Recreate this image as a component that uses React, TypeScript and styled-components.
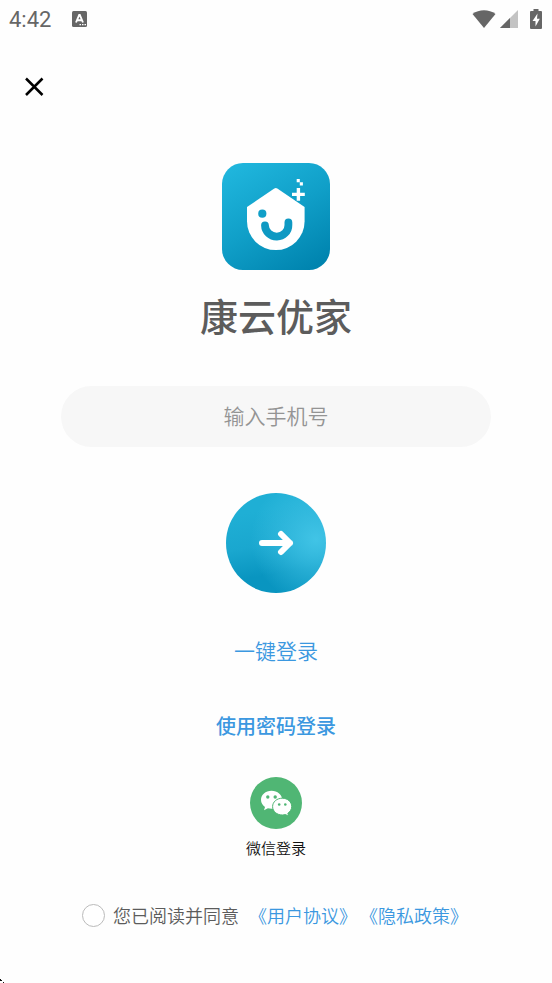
import React, { useState } from "react";
import styled, { createGlobalStyle } from "styled-components";

const GlobalStyle = createGlobalStyle`
  * { box-sizing: border-box; }
  html, body { margin: 0; background: #fefefe; }
  body, button, input {
    font-family: "Noto Sans CJK SC", "Noto Sans", sans-serif;
  }
`;

const Page = styled.div`
  position: relative;
  min-height: 100vh;
  display: flex;
  flex-direction: column;
  background: #fefefe;
`;

const StatusBar = styled.header`
  display: flex;
  align-items: center;
  justify-content: space-between;
  height: 38px;
  padding: 0 10px 0 9px;
  color: #666;
`;

const StatusGroup = styled.div<{ $gap: number }>`
  display: flex;
  align-items: center;
  gap: ${(p) => p.$gap}px;
`;

const Clock = styled.time`
  padding-top: 2px;
  font: 400 22px/36px Roboto, sans-serif;
`;

const TopNav = styled.nav`
  display: flex;
  padding: 37px 22px 0;
`;

const PlainButton = styled.button`
  display: flex;
  align-items: center;
  justify-content: center;
  padding: 0;
  border: 0;
  background: none;
  cursor: pointer;
`;

const Main = styled.main`
  display: flex;
  flex-direction: column;
  align-items: center;
  padding: 64px 61px 0;
`;

const Wordmark = styled.h1`
  margin: 17px 0 44px;
  color: #5c5c5c;
  font-size: 38px;
  font-weight: 500;
  line-height: 54px;
`;

const PhoneInput = styled.input`
  width: 100%;
  height: 61px;
  padding: 0 30px 3px;
  border: 0;
  border-radius: 32px;
  background: #f7f7f7;
  color: #333;
  font-size: 21px;
  font-weight: 350;
  text-align: center;
  &::placeholder { color: #949494; opacity: 1; }
`;

const SubmitButton = styled(PlainButton)`
  width: 100px;
  height: 100px;
  margin: 46px 0 41px;
  border-radius: 50%;
  background:
    radial-gradient(circle at 90% 46%, #41c4e6 0%, rgba(62, 193, 228, 0.7) 22%, rgba(50, 184, 220, 0) 62%),
    linear-gradient(170deg, #1fafd5 20%, #1aa7cf 50%, #0995c0 76%, #0a95c0 100%);
`;

const TextLink = styled.a<{ $size: number; $weight?: number }>`
  color: #3b98e0;
  font-size: ${(p) => p.$size}px;
  font-weight: ${(p) => p.$weight ?? 350};
  line-height: 32px;
  text-decoration: none;
`;

const LoginOptions = styled.div`
  display: flex;
  flex-direction: column;
  align-items: center;
  gap: 44px;
`;

const WechatButton = styled(PlainButton)`
  flex-direction: column;
  gap: 8px;
  margin-top: 35px;
  color: #111;
  font-size: 15px;
  font-weight: 350;
  line-height: 22px;
`;

const Agreement = styled.div`
  display: flex;
  align-items: center;
  justify-content: center;
  margin-top: 40px;
  padding: 0 10px 0 8px;
  white-space: nowrap;
`;

const AgreeLabel = styled.label`
  display: flex;
  align-items: center;
  gap: 8px;
  margin-right: 10px;
  color: #5c5c5c;
  font-size: 18px;
  font-weight: 350;
  line-height: 32px;
`;

const AgreeCheck = styled.input`
  appearance: none;
  width: 23px;
  height: 23px;
  margin: 0;
  border: 1px solid #bbb;
  border-radius: 50%;
  background: #fff;
  &:checked { background: #3b98e0; box-shadow: inset 0 0 0 4px #fff; }
`;

const PolicyLinks = styled.div`
  display: flex;
  gap: 3px;
`;

const CornerMark = styled.svg`
  position: absolute;
  left: 0;
  bottom: 0;
`;

const KeyboardIcon = () => (
  <svg width="15" height="16" viewBox="0 0 15 16" aria-hidden="true">
    <rect width="15" height="16" rx="1.5" fill="#666" />
    <path d="M4 11.500 7.200 4h.6L11 11.500M5.200 9.200h4.600" fill="none" stroke="#fff" strokeWidth="1.900" />
    <path d="M7.500 13H9v1.300H7.500zm2.500 0h1.500v1.300H10zm2.500 0H14v1.300h-1.500z" fill="#fff" />
  </svg>
);

const WifiIcon = () => (
  <svg width="24" height="19" viewBox="0 0 24 19" aria-hidden="true">
    <path d="M.5 4C7-1 17-1 23.500 4L12 18Z" fill="#666" />
  </svg>
);

const SignalIcon = () => (
  <svg width="18" height="18" viewBox="0 0 18 18" aria-hidden="true">
    <path d="M0 18 18 0v18Z" fill="#c3c3c3" />
    <path d="M0 18 10 8v10Z" fill="#666" />
  </svg>
);

const BatteryIcon = () => (
  <svg width="12" height="20" viewBox="0 0 12 20" aria-hidden="true">
    <path d="M3.500 0h5v2H11q1 0 1 1v16q0 1-1 1H1q-1 0-1-1V3q0-1 1-1h2.500Z" fill="#666" />
    <path d="M7.500 4.500 2.500 12h3v5.500l4.300-7.700H7Z" fill="#fff" />
  </svg>
);

const CloseIcon = () => (
  <svg width="24" height="24" viewBox="0 0 24 24" aria-hidden="true">
    <path d="m4 3.500 16.500 16.500M20.500 3.500 4 20" fill="none" stroke="#000" strokeWidth="2.500" />
  </svg>
);

const AppLogo = () => (
  <svg width="108" height="108" viewBox="0 0 108 108" role="img" aria-label="康云优家">
    <defs>
      <linearGradient id="logoFill" x1="0.200" y1="0" x2="0.800" y2="1">
        <stop offset="0" stopColor="#1fb5dc" />
        <stop offset="0.500" stopColor="#109fc8" />
        <stop offset="1" stopColor="#0084af" />
      </linearGradient>
    </defs>
    <rect width="108" height="107" rx="21" fill="url(#logoFill)" />
    <path d="M52.300 25.500q1.500-.9 3 0L82.600 44v14.300a28.800 28.800 0 0 1-57.600 0V44Z" fill="#fff" />
    <circle cx="40.300" cy="50.700" r="4.100" fill="#109fc8" />
    <path d="M43 62.500a11.700 11.300 0 0 0 23.400-.5v-2.500" fill="none" stroke="#0e99c3" strokeWidth="7.800" strokeLinecap="round" />
    <path d="M76.400 25v12.800M70 31.400h12.800" stroke="#109fc8" strokeWidth="6" />
    <path d="M76.400 25v12.800M70 31.400h12.800" stroke="#fff" strokeWidth="3.400" />
    <path d="M74.700 16h3.100v3.200h-3.100zM77.800 19.200h3.100v3.200h-3.100z" fill="#fff" />
  </svg>
);

const ArrowIcon = () => (
  <svg width="36" height="28" viewBox="0 0 36 28" aria-hidden="true">
    <path d="M4 14h28M23 5l9 9-9 9" fill="none" stroke="#fff" strokeWidth="6" strokeLinecap="round" strokeLinejoin="round" />
  </svg>
);

const WechatIcon = () => (
  <svg width="52" height="52" viewBox="0 0 52 52" aria-hidden="true">
    <circle cx="26" cy="26" r="26" fill="#50b674" />
    <path d="M21.500 13.700c-6 0-10.500 4-10.500 9 0 3 1.500 5.500 4 7.200l-1 3.300 3.900-2c1.100.3 2.300.5 3.600.5 6 0 10.700-4 10.700-9s-4.700-9-10.700-9Z" fill="#fff" />
    <path d="M32.300 21.200c-5.400 0-9.700 3.700-9.700 8.400s4.300 8.400 9.700 8.400c1.100 0 2.200-.2 3.200-.5l3.200 1.800-.9-3c2.400-1.600 3.900-4 3.900-6.700 0-4.700-4-8.400-9.400-8.400Z" fill="#fff" stroke="#50b674" strokeWidth="1" />
    <g fill="#50b674">
      <circle cx="17.800" cy="20" r="1.700" />
      <circle cx="25.200" cy="20" r="1.700" />
      <circle cx="29.200" cy="27.500" r="1.300" />
      <circle cx="35.300" cy="27.500" r="1.300" />
    </g>
  </svg>
);

export default function App() {
  const [phone, setPhone] = useState("");
  const [agreed, setAgreed] = useState(false);

  return (
    <Page>
      <GlobalStyle />
      <StatusBar>
        <StatusGroup $gap={21}>
          <Clock>4:42</Clock>
          <KeyboardIcon />
        </StatusGroup>
        <StatusGroup $gap={4}>
          <WifiIcon />
          <StatusGroup $gap={12}>
            <SignalIcon />
            <BatteryIcon />
          </StatusGroup>
        </StatusGroup>
      </StatusBar>
      <TopNav>
        <PlainButton type="button" aria-label="关闭">
          <CloseIcon />
        </PlainButton>
      </TopNav>
      <Main>
        <AppLogo />
        <Wordmark>康云优家</Wordmark>
        <PhoneInput
          type="tel"
          aria-label="手机号"
          placeholder="输入手机号"
          value={phone}
          onChange={(e) => setPhone(e.target.value)}
        />
        <SubmitButton type="button" aria-label="下一步">
          <ArrowIcon />
        </SubmitButton>
        <LoginOptions>
          <TextLink href="#one-key" $size={21}>一键登录</TextLink>
          <TextLink href="#password" $size={20} $weight={500}>使用密码登录</TextLink>
        </LoginOptions>
        <WechatButton type="button">
          <WechatIcon />
          微信登录
        </WechatButton>
      </Main>
      <Agreement>
        <AgreeLabel>
          <AgreeCheck
            type="checkbox"
            checked={agreed}
            onChange={(e) => setAgreed(e.target.checked)}
          />
          您已阅读并同意
        </AgreeLabel>
        <PolicyLinks>
          <TextLink href="#terms" $size={18}>《用户协议》</TextLink>
          <TextLink href="#privacy" $size={18}>《隐私政策》</TextLink>
        </PolicyLinks>
      </Agreement>
      <CornerMark width="4" height="4" viewBox="0 0 4 4" aria-hidden="true">
        <path d="M0 0h1v1h1v1H0zM3 3h1v1H3z" fill="#111" />
      </CornerMark>
    </Page>
  );
}
